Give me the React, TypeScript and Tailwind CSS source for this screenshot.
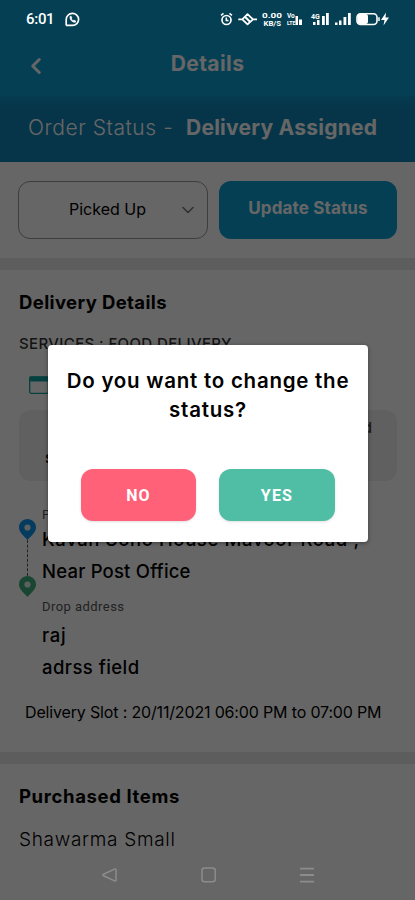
import React from "react";
import { ChevronDown, ChevronLeft } from "lucide-react";

function StatusBar() {
  return (
    <div className="absolute inset-x-0 top-0 flex h-[38px] items-center pl-[26px] pr-[25px] text-white">
      <span className="w-[29px] font-[Roboto] text-[15px] font-medium leading-none tracking-[-0.3px]">6:01</span>
      <svg className="ml-[10px]" width="15" height="15" viewBox="0 0 15 15" fill="none" stroke="white">
        <path d="M1.2 13.6 V7.5 A6.2 6 0 1 1 7.5 13.4 H1.2" strokeWidth="1.7" />
        <path d="M5.2 4.3 C4.3 7.6 7.3 10.7 10.6 10.1 L10.4 8.8 L8.9 8.2 L8 8.8 L6.3 7 L6.8 5.9 L6.2 4.4 Z" fill="white" strokeWidth=".8" />
      </svg>
      <svg className="ml-auto" width="170" height="18" viewBox="220 10 170 18" fill="none" stroke="white">
        {/* alarm */}
        <circle cx="226.5" cy="20" r="4.5" strokeWidth="1.7" />
        <path d="M221 15.3 L223.5 13.4 M232 15.3 L229.5 13.4 M226.3 17.5 V20.6 H228.5" strokeWidth="1.5" />
        {/* eye */}
        <path d="M238.3 19.3 H241.5 M253.5 19.3 H257 M242.3 19.3 L247.5 14.2 L253 19.3 L247.5 24.4 Z" strokeWidth="1.8" strokeLinejoin="round" />
        <path d="M245.2 17 L250 21.8" strokeWidth="2" />
        <g fill="white" stroke="none" fontFamily="Roboto" fontWeight="700">
          <text x="262" y="18.2" fontSize="8" textLength="20" lengthAdjust="spacingAndGlyphs">0.00</text>
          <text x="263.5" y="26.3" fontSize="7" textLength="17.5" lengthAdjust="spacingAndGlyphs">KB/S</text>
          <text x="287" y="18" fontSize="6.5">Vo</text>
          <text x="287" y="25.2" fontSize="6" textLength="8.5" lengthAdjust="spacingAndGlyphs">LTE</text>
          <text x="311" y="18.5" fontSize="7">4G</text>
        </g>
        <g fill="white" stroke="none">
          <rect x="295.5" y="16" width="2.5" height="9" />
          <rect x="299" y="19.5" width="3" height="5.5" />
          <rect x="313" y="22" width="2.5" height="3" />
          <rect x="317" y="20" width="2.5" height="5" />
          <rect x="322" y="16" width="2.8" height="9" />
          <rect x="326" y="13" width="2.8" height="12" />
          <rect x="335" y="22.5" width="2.5" height="2.5" />
          <rect x="339" y="20.5" width="2.5" height="4.5" />
          <rect x="343.5" y="17" width="2.8" height="8" />
          <rect x="348" y="13" width="2.8" height="12" />
          <rect x="357.5" y="14" width="10.5" height="10" rx="2.5" />
          <path d="M386 12.5 L381 20 H384.5 L383.5 25.5 L389 17.5 H385.5 Z" />
        </g>
        <rect x="357" y="13.7" width="20" height="10.8" rx="3.5" strokeWidth="1.6" />
        <path d="M379 17.3 V21" strokeWidth="1.5" />
      </svg>
    </div>
  );
}

function Pin({ color }: { color: string }) {
  return (
    <svg className="shrink-0" width="17" height="21" viewBox="0 0 17 21">
      <path d="M8.5 0 C3.8 0 0 3.7 0 8.4 C0 13 4.4 16.2 8.5 21 C12.6 16.2 17 13 17 8.4 C17 3.7 13.2 0 8.5 0 Z" fill={color} />
      <circle cx="8.5" cy="8.5" r="3.1" fill="#e8eef2" />
    </svg>
  );
}

function NavBar() {
  return (
    <div className="absolute inset-x-0 bottom-0 flex h-[50px] items-center justify-between pl-[102px] pr-[100px]">
      <svg width="16" height="16" viewBox="0 0 16 16" fill="none" stroke="#8c8c8c" strokeWidth="1.5">
        <path d="M14 3 V13 Q14 14.6 12.5 13.9 L1.5 8.8 Q.1 8 1.5 7.2 L12.5 2.1 Q14 1.4 14 3 Z" />
      </svg>
      <svg width="16" height="16" viewBox="0 0 16 16" fill="none" stroke="#8c8c8c" strokeWidth="1.5">
        <rect x="1" y="1" width="13.2" height="13.8" rx="2.5" />
      </svg>
      <svg width="16" height="16" viewBox="0 0 16 16" stroke="#8c8c8c" strokeWidth="1.8">
        <path d="M1 1.6 H15 M1 8 H15 M1 14.6 H15" />
      </svg>
    </div>
  );
}

export default function App() {
  return (
    <div className="relative h-[900px] w-full overflow-hidden bg-white font-[Inter,sans-serif] text-black">
      {/* Header */}
      <header className="grid h-[96px] grid-cols-[72px_1fr_72px] items-center bg-[#0c9ed2] pt-[32px] text-white">
        <ChevronLeft size={26} strokeWidth={2.8} className="ml-[23px] mt-[3px]" />
        <h1 className="text-center text-[21px] font-bold tracking-[0.4px]">Details</h1>
      </header>
      <div className="flex h-[66px] items-center whitespace-pre bg-[#0f85b8] bg-linear-to-b from-[#0e94c8] from-0% to-[#0f85b8] to-20% pb-[3px] pl-[28px] text-[21px] text-white">
        <span className="w-[158px] font-light tracking-[0.55px]">Order Status -</span>
        <span className="font-bold tracking-[0.25px]">Delivery Assigned</span>
      </div>

      {/* Status controls */}
      <div className="flex h-[96px] gap-[11px] px-[18px] pt-[19px]">
        <div className="flex h-[58px] w-[190px] items-center rounded-xl border border-[#999] pl-[50px] pr-[9px]">
          <span className="pb-[2px] text-[16px]">Picked Up</span>
          <ChevronDown size={20} strokeWidth={1.8} className="ml-auto text-[#777]" />
        </div>
        <button className="h-[58px] w-[178px] rounded-xl bg-[#0a9fd3] pb-[2px] text-[17px] font-bold tracking-[0.15px] text-white">Update Status</button>
      </div>
      <div className="h-[12px] bg-[#e8e8e8]" />

      {/* Delivery details */}
      <section className="h-[482px] pl-[19px] pr-[18px] pt-[20px]">
        <h2 className="text-[18.5px] font-bold leading-6 tracking-[0.38px]">Delivery Details</h2>
        <p className="mt-[18px] text-[15px] font-medium leading-6 tracking-[0.38px] text-[#333]">SERVICES : FOOD DELIVERY</p>
        <svg className="ml-[10px] mt-[20px]" width="20" height="18" viewBox="0 0 20 18">
          <rect x=".7" y="1" width="18.6" height="16.3" rx="1.5" fill="none" stroke="#12a0a0" strokeWidth="1.3" />
          <path d="M.5 .5 H19.5 V5.5 H.5 Z" fill="#12a0a0" />
        </svg>
        <div className="mt-[16px] h-[71px] rounded-xl bg-[#f0f0f0] px-[25px] pt-[3px] text-[15px] font-medium leading-[30px]">
          <p className="text-right text-[#444]">assigned</p>
          <p className="pl-[1px]">status</p>
        </div>
        <div className="mt-[26px] flex">
          <div className="flex w-[23px] flex-col pt-[12px]">
            <Pin color="#0a95ea" />
            <div className="ml-[8px] h-[36px] border-l border-dashed border-[#555]" />
            <Pin color="#40b07f" />
          </div>
          <div className="whitespace-nowrap text-[18.5px] font-medium">
            <p className="font-[Roboto] text-[13px] font-normal leading-4 text-[#555]">Pickup address</p>
            <p className="leading-[32px] tracking-[0.6px]">Kavan Sono House Mavoor Road ,</p>
            <p className="leading-[32px] tracking-[0.2px]">Near Post Office</p>
            <p className="mt-[12px] font-[Roboto] text-[13px] font-normal leading-4 tracking-[0.45px] text-[#555]">Drop address</p>
            <p className="mt-[4px] leading-[32px] tracking-[0.7px]">raj</p>
            <p className="leading-[32px] tracking-[0.45px]">adrss field</p>
          </div>
        </div>
        <p className="ml-[6px] mt-[17px] whitespace-nowrap text-[16px] leading-6 tracking-[-0.16px]">
          Delivery Slot : 20/11/2021 06:00 PM to 07:00 PM
        </p>
      </section>
      <div className="h-[12px] bg-[#e8e8e8]" />

      {/* Items */}
      <section className="pl-[19px] pt-[20px]">
        <h2 className="text-[18.5px] font-bold leading-6 tracking-[0.63px]">Purchased Items</h2>
        <p className="mt-[20px] text-[19px] font-light leading-6 tracking-[0.7px]">Shawarma Small</p>
      </section>

      {/* Confirm dialog */}
      <div className="absolute inset-0 bg-black/60 pl-[48px] pt-[345px]">
        <div className="h-[197px] w-[320px] rounded-[4px] bg-white pt-[21px] shadow-[0_1px_4px_rgba(0,0,0,0.4)]">
          <p className="text-center text-[20.5px] font-semibold leading-[29px] tracking-[0.75px]">
            Do you want to change the
            <br />
            status?
          </p>
          <div className="mt-[45px] flex gap-[23px] pl-[33px] font-[Roboto] text-[16px] font-bold tracking-[1.2px] text-white">
            <button className="h-[52px] w-[115px] rounded-xl bg-[#ff6178] pt-[1px] shadow-sm">NO</button>
            <button className="h-[52px] w-[116px] rounded-xl bg-[#50bea5] pt-[1px] shadow-sm">YES</button>
          </div>
        </div>
      </div>

      <StatusBar />
      <NavBar />
    </div>
  );
}
